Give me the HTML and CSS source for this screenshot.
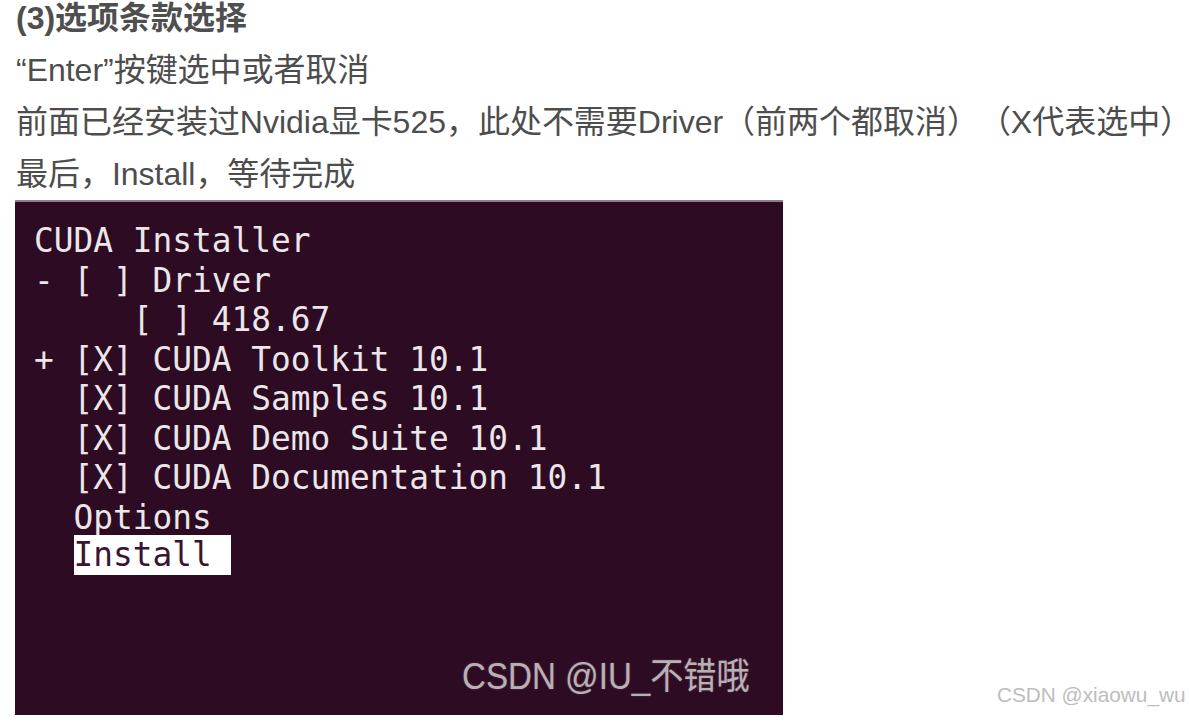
FILE: index.html
```html
<!DOCTYPE html>
<html lang="zh">
<head>
<meta charset="utf-8">
<title>选项条款选择</title>
<link rel="stylesheet" href="styles.css">
</head>
<body>
<div class="article">
  <h3 class="title">(3)选项条款选择</h3>
  <p class="line">“Enter”按键选中或者取消</p>
  <p class="line">前面已经安装过Nvidia显卡525，此处不需要Driver（前两个都取消）（X代表选中）</p>
  <p class="line">最后，Install，等待完成</p>
  <div class="figure">
    <div class="terminal">
<pre class="screen">CUDA Installer
- [ ] Driver
     [ ] 418.67
+ [X] CUDA Toolkit 10.1
  [X] CUDA Samples 10.1
  [X] CUDA Demo Suite 10.1
  [X] CUDA Documentation 10.1
  Options
  <span class="selected">Install </span></pre>
      <div class="mark-inner"><span>CSDN @IU_不错哦</span></div>
    </div>
    <div class="mark-outer"><span>CSDN @xiaowu_wu</span></div>
  </div>
</div>
</body>
</html>
```
FILE: styles.css
```css
html, body {
  margin: 0;
  padding: 0;
  background: #ffffff;
}

.article {
  padding-left: 16px;
  font-family: "Liberation Sans", "Noto Sans CJK SC", sans-serif;
  color: #4d4d4d;
  text-spacing-trim: space-all;
}

.title {
  margin: 0 0 8px 0;
  font-size: 32px;
  line-height: 36px;
  font-weight: bold;
  color: #4f4f4f;
}

.line {
  margin: 0;
  font-size: 32px;
  line-height: 52px;
  white-space: nowrap;
  letter-spacing: -0.02px;
}

.figure {
  display: flex;
  align-items: flex-end;
  padding-right: 3px;
}

.terminal {
  width: 768px;
  margin-left: -1px;
  height: 513px;
  border-top: 2px solid #8e7f89;
  background: #2d0b22;
  display: flex;
  flex-direction: column;
  flex-shrink: 0;
}

.screen {
  margin: 0;
  padding: 20px 0 0 19px;
  font-family: "DejaVu Sans Mono", monospace;
  font-size: 32.8px;
  line-height: 39.5px;
  color: #ebe6e9;
}

.selected {
  display: inline-block;
  background: #ffffff;
  color: #3a1430;
  line-height: 40px;
  height: 40px;
  vertical-align: top;
  margin-top: -3px;
}

.mark-inner {
  margin-top: auto;
  align-self: flex-end;
  margin-right: 33px;
  margin-bottom: 18px;
  font-family: "Liberation Sans", "Noto Sans CJK SC", sans-serif;
  font-size: 36px;
  line-height: 40px;
  color: #b9b0b6;
  text-shadow: 0 0 2px rgba(255, 255, 255, 0.25);
}

.mark-inner span {
  display: inline-block;
  transform: scaleX(0.92);
  transform-origin: right center;
  white-space: nowrap;
}

.mark-outer {
  margin-left: auto;
  margin-bottom: 8px;
  font-family: "Liberation Sans", sans-serif;
  font-size: 21px;
  line-height: 24px;
  color: #bdbdbd;
  white-space: nowrap;
}

.mark-outer span {
  display: inline-block;
  transform: scaleX(0.99);
  transform-origin: right center;
}
```
